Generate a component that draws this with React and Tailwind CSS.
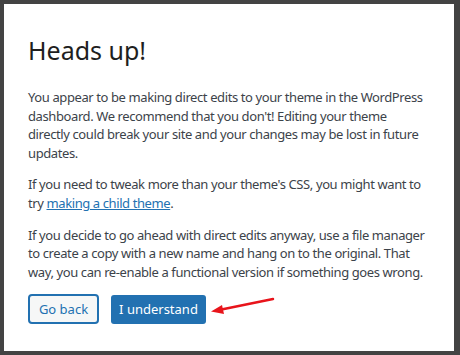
import React from 'react';

function Arrow() {
  return (
    <svg className="absolute left-[205px] top-[291px]" width="75" height="28" viewBox="0 0 75 28">
      <line x1="14" y1="19" x2="68" y2="8" stroke="#e8141b" strokeWidth="2.5" strokeLinecap="round" />
      <polygon points="6,20.5 17,14 19,23" fill="#e8141b" />
    </svg>
  );
}

export default function App() {
  return (
    <div className="relative w-[460px] h-[355px] overflow-hidden bg-[#434343] pt-[4px] pl-[4px]" style={{ fontFamily: '"Noto Sans", "Open Sans", sans-serif' }}>
      <div className="w-[450px] h-[347px] bg-white pl-[24px] pr-[22px] pt-[31px]">
        <h1 className="text-[25px] leading-[30px] font-normal text-[#1e1e1e]">Heads up!</h1>
        <div className="mt-[23px] text-[13px] leading-[18.6px] text-[#3c434a] tracking-[-0.4px] space-y-[13px]">
          <p>
            You appear to be making direct edits to your theme in the WordPress dashboard. We recommend that you don't! Editing your theme
            <br />
            directly could break your site and your changes may be lost in future updates.
          </p>
          <p>
            If you need to tweak more than your theme's CSS, you might want to try{' '}
            <a href="#" className="text-[#2271b1] underline">making a child theme</a>.
          </p>
          <p>
            If you decide to go ahead with direct edits anyway, use a file manager to create a copy with a new name and hang on to the original. That way, you can re-enable a functional version if something goes wrong.
          </p>
        </div>
        <div className="mt-[13px] flex items-center gap-[12px]">
          <button className="h-[30px] w-[71px] rounded-[4px] border-2 border-[#2271b1] bg-[#f6f7f7] text-[13px] text-[#2271b1]">
            Go back
          </button>
          <button className="h-[29px] w-[95px] rounded-[3px] bg-[#2271b1] text-[13px] text-white">
            I understand
          </button>
        </div>
      </div>
      <Arrow />
    </div>
  );
}
